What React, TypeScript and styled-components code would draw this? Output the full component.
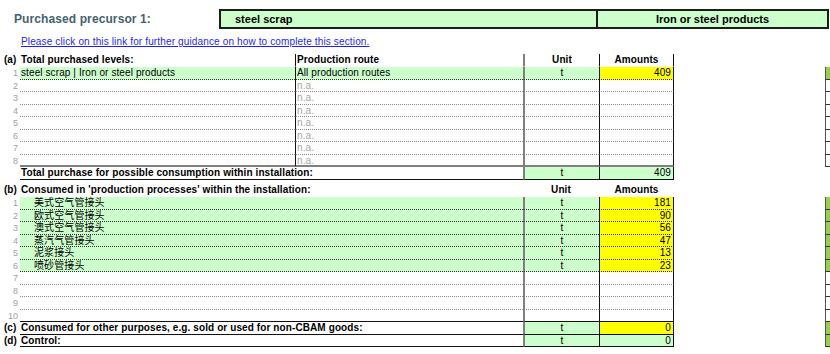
import React from 'react';
import styled, { createGlobalStyle } from 'styled-components';

type Rule = 'none' | 'dot' | 'dotDark' | 'solid' | 'thickGray';
type Edge = 'none' | 'black' | 'gray';

const LIGHT_GREEN = '#ccffcc';
const YELLOW = '#ffff00';
const SIDE_GREEN = '#92d050';
const COLS = '20px 275px 228px 76px 75px 151px 5px';

const GlobalStyle = createGlobalStyle`
  html, body {
    margin: 0;
    padding: 0;
    background: #ffffff;
  }
  body {
    font-family: "Liberation Sans", Arial, "Noto Sans CJK SC", sans-serif;
    font-size: 10px;
    color: #000000;
  }
`;

const ruleToCss = (rule?: Rule): string => {
  switch (rule) {
    case 'dot': return '1px dotted #8c8c8c';
    case 'dotDark': return '1px dotted #333333';
    case 'solid': return '1px solid #111111';
    case 'thickGray': return '2px solid #808080';
    default: return '1px solid transparent';
  }
};

const edgeToCss = (edge?: Edge): string => {
  switch (edge) {
    case 'black': return '1px solid #111111';
    case 'gray': return '2px solid #808080';
    default: return '0';
  }
};

const Sheet = styled.div`
  width: 830px;
  height: 354px;
  overflow: hidden;
`;

const TitleBar = styled.div`
  display: grid;
  grid-template-columns: 219px 379px 231px;
  height: 20px;
  margin-top: 9px;
`;

const TitleLabel = styled.div`
  padding-left: 14px;
  font-size: 12px;
  font-weight: bold;
  line-height: 20px;
  color: #44636e;
  letter-spacing: 0.1px;
`;

interface INameBoxProps {
  $centered?: boolean;
  $joined?: boolean;
}

const NameBox = styled.div<INameBoxProps>`
  box-sizing: border-box;
  background: ${LIGHT_GREEN};
  border: 2px solid #1c1c1c;
  border-left-width: ${(props: INameBoxProps): string => (props.$joined ? '0' : '2px')};
  padding-left: ${(props: INameBoxProps): string => (props.$centered ? '0' : '14px')};
  text-align: ${(props: INameBoxProps): string => (props.$centered ? 'center' : 'left')};
  font-size: 11px;
  font-weight: bold;
  line-height: 16px;
`;

const GuidanceLink = styled.a`
  display: block;
  margin: 7px 0 6px 21px;
  width: max-content;
  font-size: 10px;
  letter-spacing: 0.14px;
  line-height: 12px;
  color: #1f1fff;
  text-decoration: underline;
`;

const Section = styled.div<{ $gap?: number }>`
  margin-top: ${(props): number => props.$gap ?? 0}px;
`;

const Row = styled.div<{ $h?: number }>`
  display: grid;
  grid-template-columns: ${COLS};
  height: ${(props): number => props.$h ?? 12.5}px;
`;

const Idx = styled.div<{ $label?: boolean }>`
  box-sizing: border-box;
  padding: ${(props): string => (props.$label ? '0 0 0 4px' : '0 2px 0 0')};
  text-align: ${(props): string => (props.$label ? 'left' : 'right')};
  font-size: ${(props): string => (props.$label ? '10px' : '9px')};
  font-weight: ${(props): string => (props.$label ? 'bold' : 'normal')};
  color: ${(props): string => (props.$label ? '#000000' : '#a0a0a0')};
  line-height: 12px;
  white-space: nowrap;
`;

interface ICellProps {
  $span?: number;
  $bg?: string;
  $align?: 'left' | 'center' | 'right';
  $rule?: Rule;
  $lead?: Edge;
  $trail?: boolean;
  $bold?: boolean;
  $indent?: number;
  $muted?: boolean;
}

const Cell = styled.div<ICellProps>`
  grid-column: span ${(props: ICellProps): number => props.$span ?? 1};
  box-sizing: border-box;
  background: ${(props: ICellProps): string => props.$bg ?? 'transparent'};
  border-bottom: ${(props: ICellProps): string => ruleToCss(props.$rule)};
  border-left: ${(props: ICellProps): string => edgeToCss(props.$lead)};
  border-right: ${(props: ICellProps): string => (props.$trail ? '1px solid #111111' : '0')};
  padding: 0 ${(props: ICellProps): number => (props.$align === 'right' ? 2 : 0)}px 0 ${(props: ICellProps): number => props.$indent ?? 1}px;
  text-align: ${(props: ICellProps): string => props.$align ?? 'left'};
  font-weight: ${(props: ICellProps): string => (props.$bold ? 'bold' : 'normal')};
  color: ${(props: ICellProps): string => (props.$muted ? '#a6a6a6' : '#000000')};
  letter-spacing: 0.1px;
  line-height: 12px;
  white-space: nowrap;
  overflow: hidden;
`;

const Blank = styled.div``;

const Stub = styled.div<{ $bg?: string }>`
  box-sizing: border-box;
  background: ${(props): string => props.$bg ?? 'transparent'};
  border-left: 1px solid #555555;
  border-bottom: 1px solid #333333;
`;

interface IPurchaseRow {
  label: string;
  route: string;
  unit: string;
  amount: string;
}

const purchases: IPurchaseRow[] = [
  { label: 'steel scrap | Iron or steel products', route: 'All production routes', unit: 't', amount: '409' },
  ...Array.from({ length: 7 }, (): IPurchaseRow => ({ label: '', route: 'n.a.', unit: '', amount: '' })),
];

interface IConsumptionRow {
  good: string;
  amount: string;
}

const consumptions: IConsumptionRow[] = [
  { good: '美式空气管接头', amount: '181' },
  { good: '欧式空气管接头', amount: '90' },
  { good: '澳式空气管接头', amount: '56' },
  { good: '蒸汽气管接头', amount: '47' },
  { good: '泥浆接头', amount: '13' },
  { good: '喷砂管接头', amount: '23' },
  { good: '', amount: '' },
  { good: '', amount: '' },
  { good: '', amount: '' },
  { good: '', amount: '' },
];

const App = (): React.ReactElement => {
  return (
    <Sheet>
      <GlobalStyle />
      <TitleBar>
        <TitleLabel>Purchased precursor 1:</TitleLabel>
        <NameBox>steel scrap</NameBox>
        <NameBox $centered={true} $joined={true}>Iron or steel products</NameBox>
      </TitleBar>
      <GuidanceLink href='#'>Please click on this link for further guidance on how to complete this section.</GuidanceLink>

      <Section>
        <Row $h={13}>
          <Idx $label={true}>(a)</Idx>
          <Cell $bold={true}>Total purchased levels:</Cell>
          <Cell $bold={true} $lead='black'>Production route</Cell>
          <Cell $bold={true} $lead='gray' $align='center' $indent={0}>Unit</Cell>
          <Cell $bold={true} $lead='black' $trail={true} $align='center' $indent={0}>Amounts</Cell>
          <Blank />
          <Blank />
        </Row>
        {purchases.map((row: IPurchaseRow, index: number): React.ReactElement => {
          const isFilled = row.label !== '';
          const isLast = index === purchases.length - 1;
          const rule: Rule = isLast ? 'thickGray' : isFilled ? 'dotDark' : 'dot';
          return (
            <Row key={`purchase-${index}`}>
              <Idx>{index + 1}</Idx>
              <Cell $bg={isFilled ? LIGHT_GREEN : undefined} $rule={rule}>{row.label}</Cell>
              <Cell $bg={isFilled ? LIGHT_GREEN : undefined} $rule={rule} $lead='black' $muted={!isFilled}>{row.route}</Cell>
              <Cell $bg={isFilled ? LIGHT_GREEN : undefined} $rule={rule} $lead='gray' $align='center' $indent={0}>{row.unit}</Cell>
              <Cell $bg={isFilled ? YELLOW : undefined} $rule={rule} $lead='black' $trail={true} $align='right'>{row.amount}</Cell>
              <Blank />
              <Stub $bg={isFilled ? SIDE_GREEN : undefined} />
            </Row>
          );
        })}
        <Row $h={13}>
          <Blank />
          <Cell $span={2} $bold={true} $rule='solid'>Total purchase for possible consumption within installation:</Cell>
          <Cell $bg={LIGHT_GREEN} $rule='solid' $lead='gray' $align='center' $indent={0}>t</Cell>
          <Cell $bg={LIGHT_GREEN} $rule='solid' $lead='black' $trail={true} $align='right'>409</Cell>
          <Blank />
          <Blank />
        </Row>
      </Section>

      <Section $gap={4}>
        <Row $h={13}>
          <Idx $label={true}>(b)</Idx>
          <Cell $span={2} $bold={true}>Consumed in &apos;production processes&apos; within the installation:</Cell>
          <Cell $bold={true} $align='center' $indent={0}>Unit</Cell>
          <Cell $bold={true} $align='center' $indent={0}>Amounts</Cell>
          <Blank />
          <Blank />
        </Row>
        {consumptions.map((row: IConsumptionRow, index: number): React.ReactElement => {
          const isFilled = row.good !== '';
          const isLast = index === consumptions.length - 1;
          const rule: Rule = isLast ? 'solid' : isFilled ? 'dotDark' : 'dot';
          return (
            <Row key={`consumption-${index}`}>
              <Idx>{index + 1}</Idx>
              <Cell $span={2} $bg={isFilled ? LIGHT_GREEN : undefined} $rule={rule} $indent={14}>{row.good}</Cell>
              <Cell $bg={isFilled ? LIGHT_GREEN : undefined} $rule={rule} $lead='gray' $align='center' $indent={0}>{isFilled ? 't' : ''}</Cell>
              <Cell $bg={isFilled ? YELLOW : undefined} $rule={rule} $lead='black' $trail={true} $align='right'>{row.amount}</Cell>
              <Blank />
              <Stub $bg={isFilled ? SIDE_GREEN : undefined} />
            </Row>
          );
        })}
        <Row>
          <Idx $label={true}>(c)</Idx>
          <Cell $span={2} $bold={true} $rule='solid'>Consumed for other purposes, e.g. sold or used for non-CBAM goods:</Cell>
          <Cell $bg={LIGHT_GREEN} $rule='solid' $lead='gray' $align='center' $indent={0}>t</Cell>
          <Cell $bg={YELLOW} $rule='solid' $lead='black' $trail={true} $align='right'>0</Cell>
          <Blank />
          <Stub $bg={SIDE_GREEN} />
        </Row>
        <Row>
          <Idx $label={true}>(d)</Idx>
          <Cell $span={2} $bold={true} $rule='solid'>Control:</Cell>
          <Cell $bg={LIGHT_GREEN} $rule='solid' $lead='gray' $align='center' $indent={0}>t</Cell>
          <Cell $bg={LIGHT_GREEN} $rule='solid' $lead='black' $trail={true} $align='right'>0</Cell>
          <Blank />
          <Stub $bg={SIDE_GREEN} />
        </Row>
      </Section>
    </Sheet>
  );
};

export default App;
